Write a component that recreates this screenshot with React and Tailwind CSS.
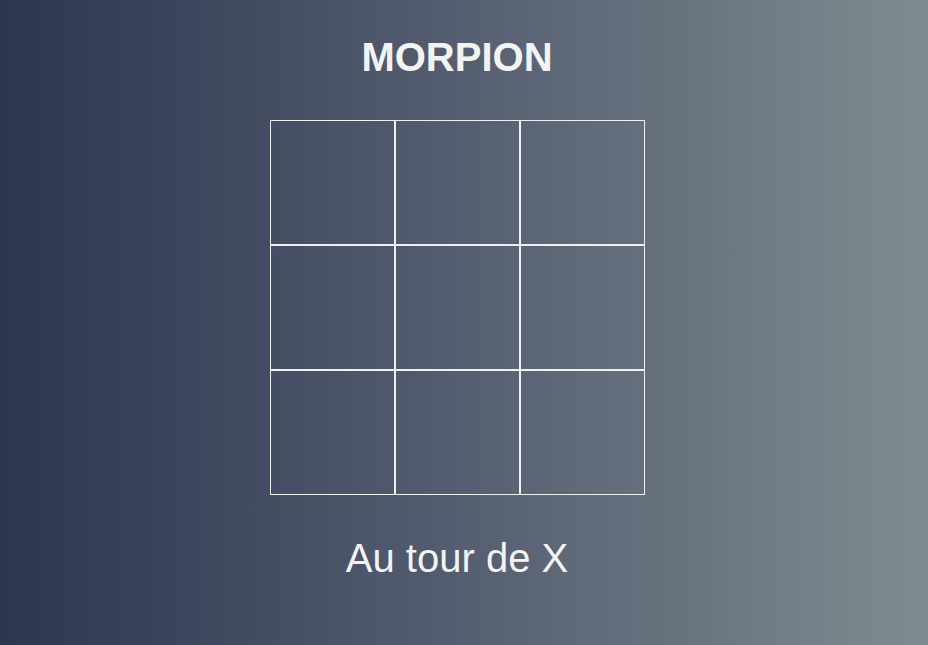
export default function App() {
  const cells = Array.from({ length: 9 });

  return (
    <div
      className="min-h-[645px] w-full bg-gradient-to-r from-[#2e3551] to-[#808b90] text-[#f3f3f3]"
      style={{ fontFamily: '"Liberation Sans", Arial, sans-serif' }}
    >
      <div className="flex w-[914px] flex-col items-center pt-[34px]">
        <h1 className="text-[40px] font-bold leading-[46px]">MORPION</h1>
        <div className="mt-[40px] grid grid-cols-3">
          {cells.map((_, i) => (
            <div key={i} className="h-[125px] w-[125px] border border-[#f0f0f0]" />
          ))}
        </div>
        <p className="mt-[40px] text-[40px] leading-[46px]">Au tour de X</p>
      </div>
    </div>
  );
}
